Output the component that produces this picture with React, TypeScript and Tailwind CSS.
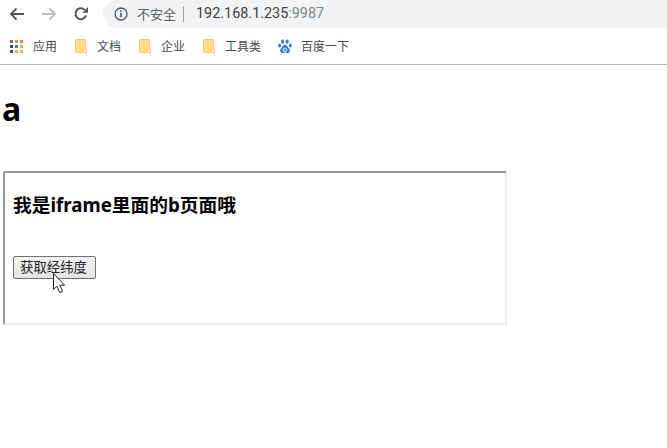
const sans = "font-['Noto_Sans','Noto_Sans_CJK_SC',sans-serif]";

function Folder() {
  return (
    <svg width="12" height="14" viewBox="0 0 12 14" className="shrink-0">
      <path d="M0.5 0.5H10.5V12L9.5 13.5H0.5Z" fill="#fddd86" stroke="#f5cf6e" />
      <rect x="9" y="10" width="2.6" height="3.5" fill="#fff" stroke="#eec060" strokeWidth="0.8" />
    </svg>
  );
}

function Apps() {
  const c = ["#a5622f", "#e09b3f", "#d98a3a", "#3a4a6b", "#3b82d0", "#e8b040", "#4a4a5c", "#e8b040", "#e8b850"];
  return (
    <div className="grid grid-cols-3 gap-[2px] shrink-0">
      {c.map((x, i) => (
        <div key={i} className="w-[3px] h-[3px]" style={{ backgroundColor: x }} />
      ))}
    </div>
  );
}

function Paw() {
  return (
    <svg width="14" height="15" viewBox="0 0 14 15" className="shrink-0">
      <g fill="#2f7fd6">
        <ellipse cx="4.6" cy="2.6" rx="1.6" ry="2.2" />
        <ellipse cx="9.2" cy="2.6" rx="1.6" ry="2.2" />
        <ellipse cx="1.6" cy="6.6" rx="1.5" ry="2" />
        <ellipse cx="12.3" cy="6.6" rx="1.5" ry="2" />
        <path d="M7 5.8C5 5.8 4.6 8 3 9.4 1.4 10.8 2 14 4.6 14 5.8 14 6.2 13.5 7 13.5S8.2 14 9.4 14C12 14 12.6 10.8 11 9.4 9.4 8 9 5.8 7 5.8Z" />
      </g>
      <circle cx="7" cy="10.8" r="1.7" fill="none" stroke="#fff" strokeWidth="0.9" />
    </svg>
  );
}

function Bookmark({ icon, label, className }: { icon: React.ReactNode; label: string; className: string }) {
  return (
    <div className={`flex items-center ${className}`}>
      {icon}
      <span className="text-[12px] leading-none text-[#444a52] pt-[2px]">{label}</span>
    </div>
  );
}

export default function App() {
  return (
    <div className={`relative w-[667px] h-[448px] overflow-hidden bg-white ${sans}`}>
      <div className="h-[28px] flex items-center">
        <svg width="16" height="14" viewBox="0 0 16 14" className="ml-[9px]" fill="none" stroke="#50555f" strokeWidth="1.8">
          <path d="M15 7H2M7.5 1.5 2 7l5.5 5.5" />
        </svg>
        <svg width="16" height="14" viewBox="0 0 16 14" className="ml-[16px]" fill="none" stroke="#b6c0c6" strokeWidth="1.8">
          <path d="M1 7h13M8.5 1.5 14 7l-5.5 5.5" />
        </svg>
        <svg width="16" height="16" viewBox="0 0 16 16" className="ml-[16px]" fill="none">
          <path d="M13 9.5A5.4 5.4 0 1 1 11.6 3.8" stroke="#50555f" strokeWidth="2" />
          <path d="M9.2 6.8H15V1Z" fill="#50555f" />
        </svg>
        <div className="ml-[14px] flex-1 h-[28px] bg-[#f1f3f4] rounded-l-[14px] flex items-center">
          <svg width="14" height="14" viewBox="0 0 14 14" className="ml-[11px]" fill="none">
            <circle cx="7" cy="7" r="6" stroke="#50555f" strokeWidth="1.3" />
            <rect x="6.2" y="6" width="1.6" height="4.2" fill="#50555f" />
            <rect x="6.2" y="3.4" width="1.6" height="1.6" fill="#50555f" />
          </svg>
          <span className="ml-[9px] text-[13px] leading-none text-[#5f6368]">不安全</span>
          <span className="ml-[7px] w-px h-[16px] bg-[#9aa0a6]" />
          <span className="ml-[12px] text-[14.4px] leading-none text-[#3c4043] font-['Roboto',sans-serif]">
            192.168.1.235<span className="text-[#80868b]">:9987</span>
          </span>
        </div>
      </div>
      <div className="h-[37px] border-b border-[#b0b0b0] flex items-center pl-[10px]">
        <Bookmark icon={<Apps />} label="应用" className="gap-[10px]" />
        <Bookmark icon={<Folder />} label="文档" className="gap-[10px] ml-[18px]" />
        <Bookmark icon={<Folder />} label="企业" className="gap-[10px] ml-[18px]" />
        <Bookmark icon={<Folder />} label="工具类" className="gap-[10px] ml-[18px]" />
        <Bookmark icon={<Paw />} label="百度一下" className="gap-[9px] ml-[17px]" />
      </div>
      <div className="pl-[3px]">
        <h1 className="text-[32px] leading-[44px] font-bold text-black -ml-px mt-[22px]">a</h1>
        <div className="mt-[40px] w-[504px] h-[154px] border-2 border-t-[#999999] border-l-[#999999] border-r-[#eeeeee] border-b-[#eeeeee] pl-[8px]">
          <h3 className="text-[18.72px] leading-[24px] font-bold text-black mt-[20px]">我是iframe里面的b页面哦</h3>
          <button className="mt-[39px] w-[83px] h-[23px] flex items-center justify-center pr-[2px] bg-gradient-to-b from-[#f4f4f4] to-[#e4e4e4] border border-[#707070] rounded-[2px] text-[13.33px] leading-none text-[#222222]">
            获取经纬度
          </button>
        </div>
      </div>
      <svg width="14" height="21" viewBox="0 0 14 21" className="absolute left-[53px] top-[273px]">
        <path d="M0.5 0.5V16.5L4 13.2 6.8 19.6 9.6 18.4 6.8 12.2H11.6Z" fill="#fff" stroke="#222" strokeWidth="1" />
      </svg>
    </div>
  );
}
